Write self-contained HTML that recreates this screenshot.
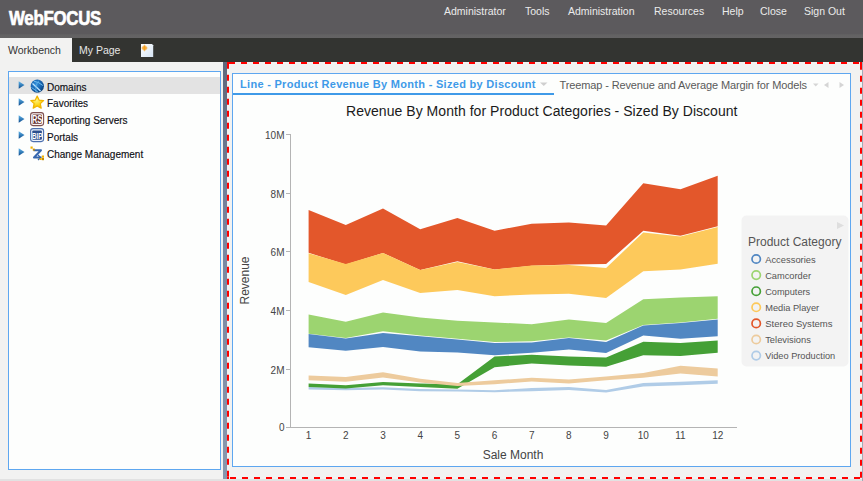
<!DOCTYPE html>
<html><head><meta charset="utf-8">
<style>
*{margin:0;padding:0;box-sizing:border-box}
html,body{width:863px;height:481px;overflow:hidden;background:#f2f2f1;font-family:"Liberation Sans",sans-serif}
.abs{position:absolute;white-space:nowrap}
#hdr{position:absolute;left:0;top:0;width:863px;height:38px;background:linear-gradient(#5c5a5d 0,#5c5a5d 33.5px,#636263 35px,#646364 38px)}
#logo{position:absolute;left:8.5px;top:6px;font-weight:bold;font-size:21px;color:#fff;letter-spacing:-0.3px;transform:scaleX(0.8);transform-origin:0 0;-webkit-text-stroke:0.7px #fff}
.menu{position:absolute;top:5px;font-size:10.5px;color:#ebebeb}
#tabbar{position:absolute;left:0;top:38px;width:863px;height:24px;background:#333431}
#wbtab{position:absolute;left:0;top:0;width:72px;height:24px;background:#f2f2f1}
.tab{position:absolute;top:6px;font-size:10.5px}
#left{position:absolute;left:8px;top:71px;width:213px;height:399px;border:1px solid #5ea7f0;background:#fdfefd}
.row{position:absolute;left:0;width:211px;height:17px}
.row .t{position:absolute;left:38px;top:4.5px;font-size:10px;color:#0e0e14;-webkit-text-stroke:0.15px #0e0e14}
.arr{position:absolute;left:10px;top:5px;width:0;height:0;border-top:3.5px solid transparent;border-bottom:3.5px solid transparent;border-left:5px solid #1f5a9e}
#split{position:absolute;left:223px;top:62px;width:4px;height:419px;background:linear-gradient(#5f687c,#7886a0 40%,#8898ae)}
#bottomstrip{position:absolute;left:0;top:479px;width:863px;height:2px;background:#e2e2e2}
#panel{position:absolute;left:232px;top:73px;width:619px;height:394px;border:1px solid #5ea7f0;background:#fdfefd}
</style></head><body>
<div id="hdr">
  <div id="logo">WebFOCUS</div>
  <div class="menu" style="left:444px">Administrator</div>
  <div class="menu" style="left:525px">Tools</div>
  <div class="menu" style="left:568px">Administration</div>
  <div class="menu" style="left:654px">Resources</div>
  <div class="menu" style="left:722px">Help</div>
  <div class="menu" style="left:760px">Close</div>
  <div class="menu" style="left:804px">Sign Out</div>
</div>
<div id="tabbar">
  <div id="wbtab"></div>
  <div class="tab" style="left:8px;color:#333">Workbench</div>
  <div class="tab" style="left:79px;color:#e6e6e6">My Page</div>
  <svg class="abs" style="left:139px;top:4px" width="16" height="16" viewBox="0 0 16 16">
    <defs><linearGradient id="pg" x1="0" y1="0" x2="1" y2="1"><stop offset="0" stop-color="#ffffff"/><stop offset="1" stop-color="#d6e4f4"/></linearGradient>
    <radialGradient id="spg" cx="0.5" cy="0.5" r="0.5"><stop offset="0" stop-color="#ffcf3a"/><stop offset="0.5" stop-color="#f59a1e"/><stop offset="1" stop-color="#f59a1e" stop-opacity="0"/></radialGradient></defs>
    <path d="M2 2 L13 2 L14.2 3.2 L14.2 15 L2 15 Z" fill="url(#pg)"/>
    <circle cx="5.5" cy="6" r="3.2" fill="url(#spg)" opacity="0.8"/>
    <path d="M5.5 2 L6.1 5.4 L9.5 6 L6.1 6.6 L5.5 10 L4.9 6.6 L1.5 6 L4.9 5.4 Z" fill="#f5a020"/>
  </svg>
</div>
<div id="left">
  <svg width="0" height="0" style="position:absolute"><defs>
    <linearGradient id="ag" x1="0" y1="0" x2="0" y2="1"><stop offset="0" stop-color="#5fb4ea"/><stop offset="1" stop-color="#0d4b8c"/></linearGradient>
    <radialGradient id="gg" cx="0.4" cy="0.35" r="0.7"><stop offset="0" stop-color="#3391dc"/><stop offset="0.65" stop-color="#125ca8"/><stop offset="1" stop-color="#093a70"/></radialGradient>
    <radialGradient id="sg" cx="0.45" cy="0.35" r="0.7"><stop offset="0" stop-color="#fff27a"/><stop offset="0.6" stop-color="#fcd414"/><stop offset="1" stop-color="#eea800"/></radialGradient>
  </defs></svg>
  <div class="row" style="top:5px;background:#e3e3e3">
    <svg class="abs" style="left:8.5px;top:4px" width="7" height="8" viewBox="0 0 7 8"><path d="M0.7 0.3 L6.5 4 L0.7 7.7 Z" fill="url(#ag)"/></svg>
    <svg class="abs" style="left:21px;top:1.5px" width="15" height="15" viewBox="0 0 15 15">
      <circle cx="7.3" cy="7.2" r="6.6" fill="url(#gg)"/>
      <path d="M2.5 4.5 L10.5 12" stroke="#bfe6ff" stroke-width="1.3" fill="none"/>
      <path d="M4 2.2 Q9 3 12.8 6.5 M1.5 8.5 Q5 11 8 13.2" stroke="#7cc8f5" stroke-width="0.9" fill="none"/>
      <path d="M9 1.5 Q5 6 6 13" stroke="#5ab0ea" stroke-width="0.8" fill="none"/>
    </svg>
    <div class="t">Domains</div>
  </div>
  <div class="row" style="top:21.75px">
    <svg class="abs" style="left:8.5px;top:4px" width="7" height="8" viewBox="0 0 7 8"><path d="M0.7 0.3 L6.5 4 L0.7 7.7 Z" fill="url(#ag)"/></svg>
    <svg class="abs" style="left:21px;top:1.5px" width="15" height="15" viewBox="0 0 15 15">
      <path d="M7.2 1 L9.1 5.1 L13.6 5.6 L10.3 8.6 L11.2 13.2 L7.2 10.9 L3.2 13.2 L4.1 8.6 L0.8 5.6 L5.3 5.1 Z" fill="url(#sg)" stroke="#f0b400" stroke-width="1.2" stroke-linejoin="round"/>
    </svg>
    <div class="t">Favorites</div>
  </div>
  <div class="row" style="top:38.5px">
    <svg class="abs" style="left:8.5px;top:4px" width="7" height="8" viewBox="0 0 7 8"><path d="M0.7 0.3 L6.5 4 L0.7 7.7 Z" fill="url(#ag)"/></svg>
    <svg class="abs" style="left:21px;top:1.2px" width="15" height="15" viewBox="0 0 15 15">
      <rect x="0.6" y="0.6" width="13" height="13" rx="2.5" fill="#fbf6f6" stroke="#7d5050" stroke-width="1.1"/>
      <rect x="2.3" y="2.5" width="9.6" height="9.2" rx="1" fill="#5e2a2a"/>
      <text x="7.1" y="11.3" font-size="10" font-weight="bold" fill="#fff" text-anchor="middle" font-family="Liberation Sans" textLength="10.4" lengthAdjust="spacingAndGlyphs">RS</text>
    </svg>
    <div class="t">Reporting Servers</div>
  </div>
  <div class="row" style="top:55.25px">
    <svg class="abs" style="left:8.5px;top:4px" width="7" height="8" viewBox="0 0 7 8"><path d="M0.7 0.3 L6.5 4 L0.7 7.7 Z" fill="url(#ag)"/></svg>
    <svg class="abs" style="left:21px;top:1.2px" width="15" height="15" viewBox="0 0 15 15">
      <rect x="0.6" y="0.6" width="13" height="13" rx="2.5" fill="#eef3fb" stroke="#4c6fae" stroke-width="1.1"/>
      <rect x="2.3" y="2.5" width="9.6" height="9.2" rx="1" fill="#2c4f8e"/>
      <text x="7.1" y="11.3" font-size="9.5" font-weight="bold" fill="#fff" text-anchor="middle" font-family="Liberation Sans" textLength="10.4" lengthAdjust="spacingAndGlyphs">BIP</text>
    </svg>
    <div class="t">Portals</div>
  </div>
  <div class="row" style="top:72px">
    <svg class="abs" style="left:8.5px;top:4px" width="7" height="8" viewBox="0 0 7 8"><path d="M0.7 0.3 L6.5 4 L0.7 7.7 Z" fill="url(#ag)"/></svg>
    <svg class="abs" style="left:21px;top:2px" width="15" height="15" viewBox="0 0 15 15">
      <path d="M3.5 4.2 L11 4.2 L4 11.5 L11.5 11.5" stroke="#3566ad" stroke-width="2" fill="none" stroke-linejoin="round"/>
      <path d="M8 9 L10.5 11.5 L8 14" stroke="#3566ad" stroke-width="1.2" fill="none"/>
      <rect x="0.5" y="0.5" width="2.2" height="2.2" fill="#f0b000"/><rect x="2.8" y="2.6" width="2" height="2" fill="#c58a00"/>
      <rect x="11.8" y="9.5" width="2.2" height="2.2" fill="#f0b000"/><rect x="11.8" y="12" width="2.2" height="2.2" fill="#c58a00"/><rect x="9.6" y="12" width="2" height="2" fill="#f0b000"/>
    </svg>
    <div class="t">Change Management</div>
  </div>
</div>
<div id="split"></div>
<div id="bottomstrip"></div>
<div style="position:absolute;left:862px;top:62px;width:1px;height:419px;background:#a3abb8"></div>
<svg class="abs" style="left:0;top:0" width="863" height="481">
  <!-- red dashed border -->
  <g stroke="#ff0000" stroke-width="2" fill="none">
    <line x1="229" y1="63" x2="862" y2="63" stroke-dasharray="6 6"/>
    <line x1="230" y1="478" x2="862" y2="478" stroke-dasharray="6 6"/>
    <line x1="228" y1="62.75" x2="228" y2="477" stroke-dasharray="6 6"/>
    <line x1="861" y1="63.8" x2="861" y2="479" stroke-dasharray="6 6"/>
  </g>
  <rect x="227" y="62" width="2" height="2" fill="#ff0000"/>
  <rect x="227" y="477" width="2" height="2" fill="#ff0000"/>
  <rect x="860" y="62" width="2" height="2" fill="#ff0000"/>
</svg>
<div id="panel"></div>
<svg class="abs" style="left:0;top:0" width="863" height="481">
  <!-- tabs -->
  <text x="240" y="88" font-size="11" font-weight="bold" fill="#3f9ae8" font-family="Liberation Sans" textLength="295.5" lengthAdjust="spacing">Line - Product Revenue By Month - Sized by Discount</text>
  <path d="M540 82.5 L547.5 82.5 L543.75 86 Z" fill="#cfcfcf"/>
  <rect x="233" y="93" width="321" height="2" fill="#3f9ae8"/>
  <text x="559.5" y="89" font-size="11" fill="#5a5a5a" font-family="Liberation Sans" textLength="247.5" lengthAdjust="spacing">Treemap - Revenue and Average Margin for Models</text>
  <path d="M813 83.5 L818.5 83.5 L815.75 86.5 Z" fill="#d5d5d5"/>
  <path d="M828.5 82 L824 85 L828.5 88 Z" fill="#d5d5d5"/>
  <path d="M839.5 82 L844 85 L839.5 88 Z" fill="#d5d5d5"/>
  <!-- title -->
  <text x="346" y="115.7" font-size="14" fill="#1a1a1a" font-family="Liberation Sans" textLength="391.5" lengthAdjust="spacing">Revenue By Month for Product Categories - Sized By Discount</text>
  <!-- axes -->
  <g stroke="#b4b4b4" stroke-width="1" fill="none">
    <line x1="290.5" y1="134" x2="290.5" y2="427.5"/>
    <line x1="286" y1="427.5" x2="737" y2="427.5"/>
    <line x1="286" y1="134.5" x2="290" y2="134.5"/>
    <line x1="286" y1="193.5" x2="290" y2="193.5"/>
    <line x1="286" y1="251.5" x2="290" y2="251.5"/>
    <line x1="286" y1="310.5" x2="290" y2="310.5"/>
    <line x1="286" y1="369.5" x2="290" y2="369.5"/>
  </g>
  <g font-size="10" fill="#444" font-family="Liberation Sans" text-anchor="end" transform="translate(1,0.5)">
    <text x="283.5" y="138">10M</text>
    <text x="283.5" y="197.3">8M</text>
    <text x="283.5" y="255.5">6M</text>
    <text x="283.5" y="314.5">4M</text>
    <text x="283.5" y="373">2M</text>
    <text x="283.5" y="430.8">0</text>
  </g>
  <g font-size="10" fill="#444" font-family="Liberation Sans" text-anchor="middle">
    <text x="308.6" y="438.8">1</text><text x="345.8" y="438.8">2</text><text x="383" y="438.8">3</text>
    <text x="420.2" y="438.8">4</text><text x="457.4" y="438.8">5</text><text x="494.6" y="438.8">6</text>
    <text x="531.7" y="438.8">7</text><text x="568.9" y="438.8">8</text><text x="606.1" y="438.8">9</text>
    <text x="643.3" y="438.8">10</text><text x="680.5" y="438.8">11</text><text x="717.7" y="438.8">12</text>
  </g>
  <text x="513" y="459" font-size="12" fill="#444" font-family="Liberation Sans" text-anchor="middle">Sale Month</text>
  <text transform="translate(249,280.5) rotate(-90)" font-size="12" fill="#444" font-family="Liberation Sans" text-anchor="middle">Revenue</text>
  <!-- data -->
<polygon fill="#e3572b" points="308.6,210.0 345.8,225.0 383.0,208.6 420.2,229.2 457.4,218.0 494.6,230.7 531.7,223.7 568.9,222.5 606.1,225.5 643.3,183.2 680.5,189.2 717.7,175.7 717.7,226.2 680.5,235.7 643.3,230.7 606.1,264.0 568.9,264.5 531.7,265.7 494.6,269.5 457.4,261.2 420.2,270.0 383.0,253.0 345.8,264.5 308.6,252.8"/>
<polygon fill="#fdc95b" points="308.6,253.2 345.8,264.0 383.0,253.0 420.2,270.0 457.4,262.0 494.6,269.5 531.7,265.5 568.9,265.0 606.1,268.0 643.3,232.5 680.5,236.5 717.7,227.0 717.7,263.8 680.5,269.5 643.3,271.2 606.1,298.0 568.9,293.8 531.7,294.5 494.6,296.2 457.4,290.0 420.2,293.0 383.0,280.0 345.8,295.0 308.6,282.0"/>
<polygon fill="#9cd470" points="308.6,314.5 345.8,321.7 383.0,312.5 420.2,317.5 457.4,320.8 494.6,322.5 531.7,324.2 568.9,319.5 606.1,323.0 643.3,299.2 680.5,297.5 717.7,296.2 717.7,318.8 680.5,322.5 643.3,325.0 606.1,340.5 568.9,337.5 531.7,341.2 494.6,342.0 457.4,338.8 420.2,335.5 383.0,331.2 345.8,338.0 308.6,333.7"/>
<polygon fill="#5187c2" points="308.6,334.0 345.8,338.5 383.0,333.0 420.2,336.2 457.4,339.5 494.6,343.0 531.7,342.5 568.9,338.0 606.1,342.0 643.3,325.5 680.5,323.0 717.7,319.5 717.7,336.2 680.5,338.8 643.3,335.5 606.1,353.0 568.9,349.5 531.7,352.8 494.6,355.2 457.4,352.6 420.2,351.5 383.0,347.0 345.8,350.8 308.6,347.2"/>
<polygon fill="#b0cce7" points="308.6,387.0 345.8,388.0 383.0,387.3 420.2,389.0 457.4,389.4 494.6,390.3 531.7,388.0 568.9,387.0 606.1,390.0 643.3,383.1 680.5,381.7 717.7,380.3 717.7,383.8 680.5,385.2 643.3,386.6 606.1,392.6 568.9,390.0 531.7,391.2 494.6,392.2 457.4,391.5 420.2,391.2 383.0,389.4 345.8,390.3 308.6,389.4"/>
<polygon fill="#45a036" points="308.6,383.4 345.8,385.2 383.0,382.0 420.2,383.4 457.4,384.2 494.6,356.5 531.7,354.8 568.9,356.6 606.1,357.6 643.3,341.8 680.5,342.9 717.7,340.6 717.7,352.7 680.5,356.1 643.3,355.2 606.1,366.8 568.9,365.6 531.7,363.5 494.6,367.2 457.4,388.7 420.2,387.0 383.0,385.2 345.8,388.6 308.6,387.0"/>
<polygon fill="#edcb9d" points="308.6,375.4 345.8,376.9 383.0,372.2 420.2,378.7 457.4,383.0 494.6,380.3 531.7,377.8 568.9,379.4 606.1,376.4 643.3,373.1 680.5,365.7 717.7,368.5 717.7,376.4 680.5,373.4 643.3,377.8 606.1,380.3 568.9,383.4 531.7,381.5 494.6,384.2 457.4,386.0 420.2,382.4 383.0,377.5 345.8,381.7 308.6,380.2"/>

  <!-- legend -->
  <rect x="741.5" y="215.5" width="107" height="151" rx="5" fill="#f3f3f3"/>
  <path d="M837 222 L844 225.5 L837 229 Z" fill="#dedede"/>
  <text x="748" y="245.7" font-size="12" fill="#555" font-family="Liberation Sans">Product Category</text>
  <g fill="none" stroke-width="1.7">
    <circle cx="756.2" cy="259" r="4.2" stroke="#5187c2"/>
    <circle cx="756.2" cy="275.1" r="4.2" stroke="#9cd470"/>
    <circle cx="756.2" cy="291.2" r="4.2" stroke="#45a036"/>
    <circle cx="756.2" cy="307.3" r="4.2" stroke="#fdc95b"/>
    <circle cx="756.2" cy="323.4" r="4.2" stroke="#e3572b"/>
    <circle cx="756.2" cy="339.5" r="4.2" stroke="#edcb9d"/>
    <circle cx="756.2" cy="355.6" r="4.2" stroke="#b0cce7"/>
  </g>
  <g font-size="9.8" fill="#555" font-family="Liberation Sans">
    <text x="765.2" y="262.5" textLength="50.5" lengthAdjust="spacingAndGlyphs">Accessories</text>
    <text x="765.2" y="278.6" textLength="45.8" lengthAdjust="spacingAndGlyphs">Camcorder</text>
    <text x="765.2" y="294.7" textLength="45" lengthAdjust="spacingAndGlyphs">Computers</text>
    <text x="765.2" y="310.8" textLength="54" lengthAdjust="spacingAndGlyphs">Media Player</text>
    <text x="765.2" y="326.9" textLength="67.4" lengthAdjust="spacingAndGlyphs">Stereo Systems</text>
    <text x="765.2" y="343.0" textLength="45.7" lengthAdjust="spacingAndGlyphs">Televisions</text>
    <text x="765.2" y="359.1" textLength="70" lengthAdjust="spacingAndGlyphs">Video Production</text>
  </g>
</svg>
</body></html>
